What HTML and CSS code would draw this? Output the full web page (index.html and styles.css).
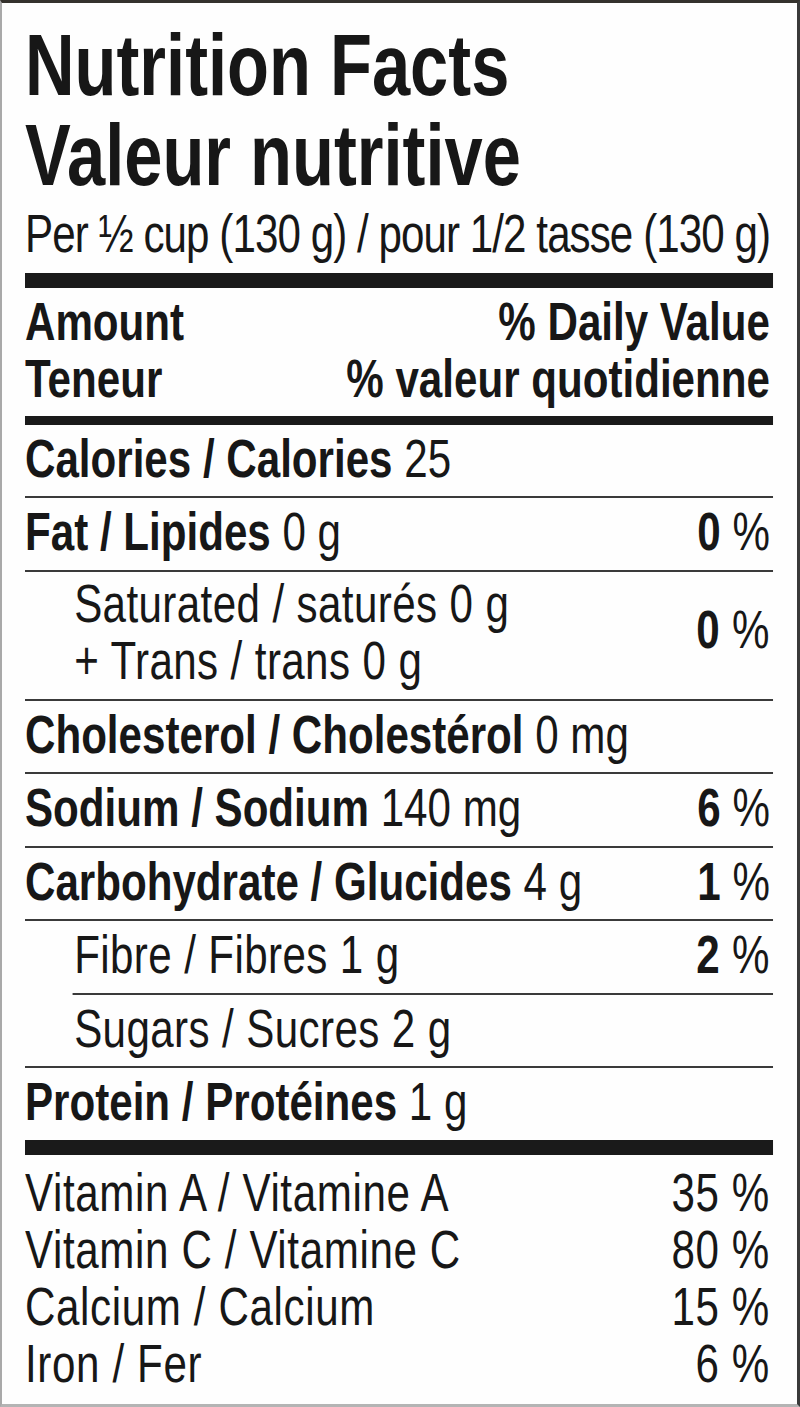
FILE: index.html
```html
<!DOCTYPE html>
<html lang="en">
<head>
<meta charset="utf-8">
<title>Nutrition Facts</title>
<link rel="stylesheet" href="styles.css">
</head>
<body>
<div class="frame">
  <div class="label">
    <h1 class="title">Nutrition Facts<br>Valeur nutritive</h1>
    <p class="serving">Per ½ cup (130 g) / pour 1/2 tasse (130 g)</p>
    <div class="bar bar-thick"></div>
    <div class="head">
      <div class="head-col"><span>Amount</span><span>Teneur</span></div>
      <div class="head-col head-right"><span>% Daily Value</span><span>% valeur quotidienne</span></div>
    </div>
    <div class="bar bar-mid"></div>

    <div class="row"><span class="nutrient"><b>Calories / Calories</b> 25</span></div>
    <div class="row"><span class="nutrient"><b>Fat / Lipides</b> 0 g</span><span class="dv"><b>0</b> %</span></div>
    <div class="row row-sub row-double">
      <span class="nutrient">Saturated / saturés 0 g<br>+ Trans / trans 0 g</span>
      <span class="dv dv-mid"><b>0</b> %</span>
    </div>
    <div class="row"><span class="nutrient"><b>Cholesterol / Cholestérol</b> 0 mg</span></div>
    <div class="row"><span class="nutrient"><b>Sodium / Sodium</b> 140 mg</span><span class="dv"><b>6</b> %</span></div>
    <div class="row"><span class="nutrient"><b>Carbohydrate / Glucides</b> 4 g</span><span class="dv"><b>1</b> %</span></div>
    <div class="row row-sub row-fibre"><span class="nutrient">Fibre / Fibres 1 g</span><span class="dv"><b>2</b> %</span></div>
    <div class="row row-sub"><span class="nutrient">Sugars / Sucres 2 g</span></div>
    <div class="row row-last"><span class="nutrient"><b>Protein / Protéines</b> 1 g</span></div>

    <div class="bar bar-thick bar-vit"></div>
    <div class="vitamins">
      <div class="vit"><span>Vitamin A / Vitamine A</span><span>35 %</span></div>
      <div class="vit"><span>Vitamin C / Vitamine C</span><span>80 %</span></div>
      <div class="vit"><span>Calcium / Calcium</span><span>15 %</span></div>
      <div class="vit"><span>Iron / Fer</span><span>6 %</span></div>
    </div>
  </div>
</div>
</body>
</html>
```

FILE: styles.css
```css
html, body {
  margin: 0;
  padding: 0;
  background: #ffffff;
}

body {
  font-family: "Liberation Sans", Arial, sans-serif;
  color: #171717;
}

.frame {
  box-sizing: border-box;
  width: 800px;
  height: 1407px;
  border-style: solid;
  border-width: 3px 3px 3px 2px;
  border-color: #35322d #3a3a3a #b4b4b4 #a9a9a9;
  padding: 0 24px 0 23px;
  overflow: hidden;
  background: #fefefe;
}

/* condensed type: whole label is drawn wide, then narrowed */
.label {
  width: 959px;
  transform: scaleX(0.78);
  transform-origin: 0 0;
}

.title {
  margin: 0;
  padding-top: 16.5px;
  font-size: 88px;
  line-height: 90px;
  font-weight: 700;
  letter-spacing: 0;
}

.serving {
  margin: 3.8px 0 0;
  font-size: 54px;
  line-height: 60px;
  letter-spacing: -1.2px;
  white-space: nowrap;
}

.bar {
  background: #1a1a1a;
}

.bar-thick {
  height: 15px;
  margin-top: 9.7px;
}

.bar-mid {
  height: 9px;
  margin-top: 9px;
}

.head {
  display: flex;
  justify-content: space-between;
  margin-top: 5px;
  padding-right: 4px;
  font-size: 54px;
  line-height: 57px;
  font-weight: 700;
}

.head-col {
  display: flex;
  flex-direction: column;
}

.head-right {
  align-items: flex-end;
}

.row {
  display: flex;
  justify-content: space-between;
  align-items: flex-start;
  padding: 3px 4px 8.5px 0;
  border-bottom: 2px solid #3a3a3a;
  font-size: 54px;
  line-height: 60px;
  white-space: nowrap;
}

.row b {
  font-weight: 700;
}

.row-sub {
  padding-left: 63px;
  letter-spacing: 0.5px;
}

.row-double {
  padding-bottom: 10px;
  line-height: 57px;
}

.row-fibre {
  margin-left: 61px;
  padding-left: 2px;
}

.row-last {
  border-bottom: none;
}

.dv-mid {
  line-height: 60px;
  margin-top: 24px;
}

.bar-vit {
  margin-top: 0;
}

.vitamins {
  margin-top: 9px;
  padding-right: 4px;
  font-size: 54px;
  line-height: 57px;
  letter-spacing: 0.8px;
}

.vit {
  display: flex;
  justify-content: space-between;
  white-space: nowrap;
}
```
